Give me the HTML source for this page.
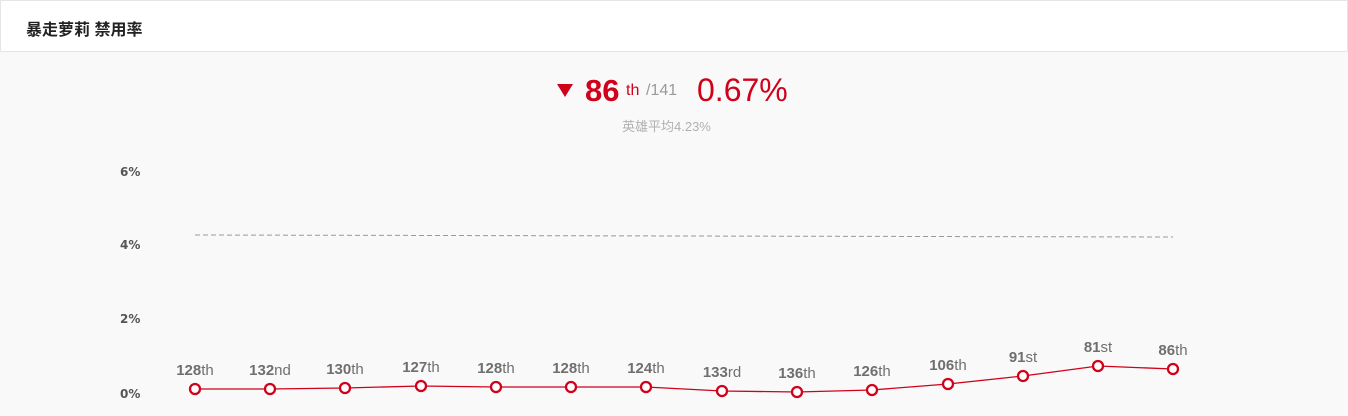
<!DOCTYPE html>
<html><head><meta charset="utf-8">
<style>
html,body{margin:0;padding:0;width:1348px;height:416px;overflow:hidden;background:#f9f9f9;font-family:"Liberation Sans","Noto Sans CJK SC",sans-serif;}
.hd{position:absolute;left:0;top:0;width:1346px;height:50px;background:#fff;border:1px solid #e5e5e5;}
.hd span{position:absolute;left:25px;top:15px;font-size:16px;font-weight:bold;color:#222;}
svg{position:absolute;left:0;top:0;}
</style></head><body>
<div class="hd"><span>暴走萝莉 禁用率</span></div>
<svg width="1348" height="416" xmlns="http://www.w3.org/2000/svg" font-family="Liberation Sans, Noto Sans CJK SC, sans-serif">
<polygon points="557,84 573,84 565,97" fill="#d0021b"/>
<text x="585" y="101" font-size="31" font-weight="bold" fill="#d0021b">86</text>
<text x="626" y="95" font-size="16" fill="#d0021b">th</text>
<text x="646" y="95" font-size="16" fill="#999">/141</text>
<text x="697" y="101" font-size="32" fill="#d0021b">0.67%</text>
<text x="622" y="131" font-size="13" fill="#b0b0b0">英雄平均4.23%</text>
<g font-family="DejaVu Sans, sans-serif" font-size="12" font-weight="bold" fill="#555">
<text x="120" y="176">6%</text>
<text x="120" y="249">4%</text>
<text x="120" y="323">2%</text>
<text x="120" y="398">0%</text>
</g>
<line x1="195" y1="235" x2="1173" y2="237" stroke="#999" stroke-width="1" stroke-dasharray="5,3"/>
<polyline fill="none" stroke="#d0021b" stroke-width="1.3" points="195,389 270,389 345,388 421,386 496,387 571,387 646,387 722,391 797,392 872,390 948,384 1023,376 1098,366 1173,369"/>
<g fill="#fff" stroke="#d0021b" stroke-width="2.3">
<circle cx="195" cy="389" r="5"/><circle cx="270" cy="389" r="5"/><circle cx="345" cy="388" r="5"/><circle cx="421" cy="386" r="5"/><circle cx="496" cy="387" r="5"/><circle cx="571" cy="387" r="5"/><circle cx="646" cy="387" r="5"/><circle cx="722" cy="391" r="5"/><circle cx="797" cy="392" r="5"/><circle cx="872" cy="390" r="5"/><circle cx="948" cy="384" r="5"/><circle cx="1023" cy="376" r="5"/><circle cx="1098" cy="366" r="5"/><circle cx="1173" cy="369" r="5"/>
</g>
<g font-family="Liberation Sans, sans-serif" font-size="15" fill="#6f6f6f" text-anchor="middle">
<text x="195" y="375"><tspan font-weight="bold">128</tspan>th</text>
<text x="270" y="375"><tspan font-weight="bold">132</tspan>nd</text>
<text x="345" y="374"><tspan font-weight="bold">130</tspan>th</text>
<text x="421" y="372"><tspan font-weight="bold">127</tspan>th</text>
<text x="496" y="373"><tspan font-weight="bold">128</tspan>th</text>
<text x="571" y="373"><tspan font-weight="bold">128</tspan>th</text>
<text x="646" y="373"><tspan font-weight="bold">124</tspan>th</text>
<text x="722" y="377"><tspan font-weight="bold">133</tspan>rd</text>
<text x="797" y="378"><tspan font-weight="bold">136</tspan>th</text>
<text x="872" y="376"><tspan font-weight="bold">126</tspan>th</text>
<text x="948" y="370"><tspan font-weight="bold">106</tspan>th</text>
<text x="1023" y="362"><tspan font-weight="bold">91</tspan>st</text>
<text x="1098" y="352"><tspan font-weight="bold">81</tspan>st</text>
<text x="1173" y="355"><tspan font-weight="bold">86</tspan>th</text>
</g>
</svg>
</body></html>
